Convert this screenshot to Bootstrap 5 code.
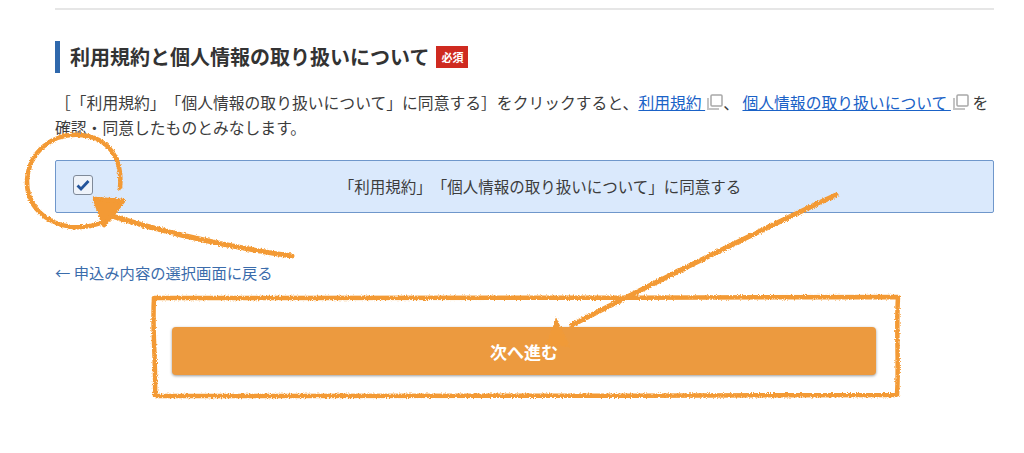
<!DOCTYPE html>
<html lang="ja">
<head>
    <meta charset="UTF-8">
    <meta name="viewport" content="width=device-width, initial-scale=1.0">
    <title>利用規約と個人情報の取り扱いについて</title>
    <link href="https://cdn.jsdelivr.net/npm/bootstrap@5.3.0/dist/css/bootstrap.min.css" rel="stylesheet">
    <style>
        body {
            font-family: "Noto Sans CJK JP", "Liberation Sans", sans-serif;
            font-feature-settings: "chws" 0;
            text-spacing-trim: space-all;
            color: #3c3c3c;
            background-color: #fff;
            height: 453px;
            overflow: hidden;
            position: relative;
        }

        .page-wrap {
            padding: 8px 30px 0 55px;
        }

        .top-rule {
            height: 2px;
            background-color: #e6e6e6;
            margin-bottom: 31px;
        }

        .terms-title {
            border-left: 5px solid #2f68ac;
            padding-left: 10px;
            height: 32px;
            font-size: 20px;
            font-weight: 700;
            line-height: 32px;
            color: #333;
            margin-bottom: 17px;
        }

        .req-tag {
            background-color: #cf2a20;
            color: #fff;
            font-size: 11px;
            font-weight: 700;
            width: 32px;
            height: 22px;
            line-height: 22px;
            text-align: center;
            margin-left: 7px;
            margin-top: 5px;
        }

        .terms-text {
            font-size: 15.8px;
            line-height: 25px;
            margin-bottom: 20px;
        }

        .terms-text a {
            color: #1a62c7;
            padding-right: 2px;
        }

        .ext-mark {
            width: 16px;
            height: 16px;
            vertical-align: -1px;
        }

        .agree-box {
            height: 53px;
            background-color: #dae9fc;
            border: 1px solid #6f97cb;
            border-radius: 2px;
            padding: 0 6px 0 17px;
            font-size: 15.5px;
            margin-bottom: 49px;
        }

        .agree-check {
            width: 20px;
            height: 20px;
            background-color: #eef3fa;
            border: 1px solid #7f8a99;
            border-radius: 3px;
            flex-shrink: 0;
            margin-bottom: 3px;
        }

        .back-link {
            color: #3b6cab;
            font-size: 15.3px;
            line-height: 20px;
            text-decoration: none;
        }

        .next-btn {
            width: 704px;
            height: 48px;
            margin: 45px 0 0 117px;
            padding-top: 3px;
            background-color: #ec9a3f;
            border: 0;
            border-radius: 4px;
            box-shadow: 0 1px 3px rgba(0, 0, 0, .4);
            color: #fff;
            font-size: 17px;
            font-weight: 700;
        }

        .marker-layer {
            position: absolute;
            left: 0;
            top: 0;
            pointer-events: none;
        }
    </style>
</head>
<body>
    <div class="page-wrap">
        <div class="top-rule"></div>

        <div class="terms-title d-flex">
            <span>利用規約と個人情報の取り扱いについて</span>
            <span class="req-tag">必須</span>
        </div>

        <p class="terms-text">［「利用規約」「個人情報の取り扱いについて」に同意する］をクリックすると、<a href="#">利用規約 </a><svg class="ext-mark" viewBox="0 0 16 16"><path d="M1 4v11h11" fill="none" stroke="#c4c4c4" stroke-width="2"/><rect x="4" y="1" width="11" height="11" rx="1" fill="#fff" stroke="#a8a8a8" stroke-width="1.5"/></svg>、 <a href="#">個人情報の取り扱いについて </a><svg class="ext-mark" viewBox="0 0 16 16"><path d="M1 4v11h11" fill="none" stroke="#c4c4c4" stroke-width="2"/><rect x="4" y="1" width="11" height="11" rx="1" fill="#fff" stroke="#a8a8a8" stroke-width="1.5"/></svg> を確認・同意したものとみなします。</p>

        <div class="agree-box d-flex align-items-center">
            <span class="agree-check d-flex align-items-center justify-content-center">
                <svg width="14" height="12" viewBox="0 0 14 12"><path d="M1.5 6.5 5 10 12.5 2" fill="none" stroke="#23549b" stroke-width="2.8"/></svg>
            </span>
            <span class="flex-grow-1 text-center">「利用規約」「個人情報の取り扱いについて」に同意する</span>
        </div>

        <a class="back-link d-block" href="#">← 申込み内容の選択画面に戻る</a>

        <button class="next-btn d-block" type="button">次へ進む</button>
    </div>

    <!-- hand drawn crayon marks over the page -->
    <svg class="marker-layer" width="1024" height="453" viewBox="0 0 1024 453">
        <defs>
            <filter id="crayon" x="0" y="0" width="1024" height="453" filterUnits="userSpaceOnUse">
                <feTurbulence type="fractalNoise" baseFrequency="0.75" numOctaves="2" seed="4"/>
                <feDisplacementMap in="SourceGraphic" scale="3.5" xChannelSelector="R" yChannelSelector="G"/>
            </filter>
        </defs>
        <g filter="url(#crayon)" fill="none" stroke="#f39a34" stroke-width="4.5" stroke-linecap="round" stroke-linejoin="round">
            <path d="M120 188C123 158 108 137 80 135 52 133 29 152 27 180 26 205 45 224 72 227 84 228 94 226 103 222"/>
            <path d="M105 214C150 228 220 246 292 256" stroke-width="5"/>
            <path d="M95 199 123 201 104 225Z" fill="#f39a34"/>
            <path d="M154 298C350 296 650 299 898 297 896 330 899 365 897 395 650 397 350 394 155 396 156 360 152 330 154 298Z"/>
            <path d="M836 195C750 235 660 280 572 325" stroke-width="5"/>
        </g>
        <path d="M556 317 546 345 570 347Z" fill="#f09a38" filter="url(#crayon)"/>
    </svg>

    <script src="https://cdn.jsdelivr.net/npm/bootstrap@5.3.0/dist/js/bootstrap.bundle.min.js"></script>
</body>
</html>
